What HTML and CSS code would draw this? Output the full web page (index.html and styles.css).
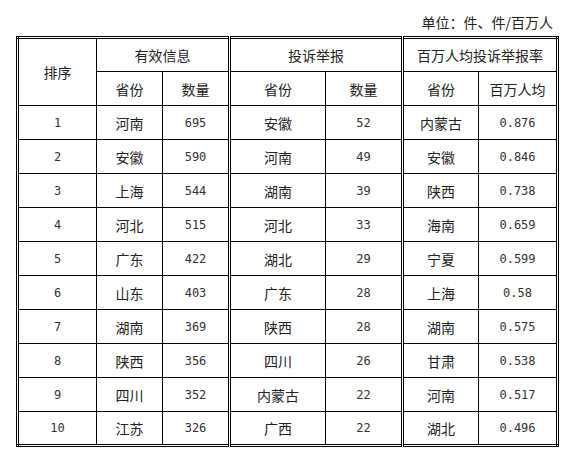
FILE: index.html
```html
<!DOCTYPE html>
<html lang="zh">
<head>
<meta charset="utf-8">
<link rel="stylesheet" href="styles.css">
</head>
<body>
<div class="page">
  <div class="unit">单位：件、件/百万人</div>
  <table class="rank">
    <colgroup>
      <col class="c1"><col class="c2"><col class="c3"><col class="c4"><col class="c5"><col class="c6"><col class="c7">
    </colgroup>
    <thead>
      <tr>
        <th rowspan="2">排序</th>
        <th colspan="2" class="g">有效信息</th>
        <th colspan="2" class="g">投诉举报</th>
        <th colspan="2">百万人均投诉举报率</th>
      </tr>
      <tr>
        <th>省份</th><th class="g">数量</th>
        <th>省份</th><th class="g">数量</th>
        <th>省份</th><th>百万人均</th>
      </tr>
    </thead>
    <tbody>
      <tr><td class="n">1</td><td>河南</td><td class="n g">695</td><td>安徽</td><td class="n g">52</td><td>内蒙古</td><td class="n">0.876</td></tr>
      <tr><td class="n">2</td><td>安徽</td><td class="n g">590</td><td>河南</td><td class="n g">49</td><td>安徽</td><td class="n">0.846</td></tr>
      <tr><td class="n">3</td><td>上海</td><td class="n g">544</td><td>湖南</td><td class="n g">39</td><td>陕西</td><td class="n">0.738</td></tr>
      <tr><td class="n">4</td><td>河北</td><td class="n g">515</td><td>河北</td><td class="n g">33</td><td>海南</td><td class="n">0.659</td></tr>
      <tr><td class="n">5</td><td>广东</td><td class="n g">422</td><td>湖北</td><td class="n g">29</td><td>宁夏</td><td class="n">0.599</td></tr>
      <tr><td class="n">6</td><td>山东</td><td class="n g">403</td><td>广东</td><td class="n g">28</td><td>上海</td><td class="n">0.58</td></tr>
      <tr><td class="n">7</td><td>湖南</td><td class="n g">369</td><td>陕西</td><td class="n g">28</td><td>湖南</td><td class="n">0.575</td></tr>
      <tr><td class="n">8</td><td>陕西</td><td class="n g">356</td><td>四川</td><td class="n g">26</td><td>甘肃</td><td class="n">0.538</td></tr>
      <tr><td class="n">9</td><td>四川</td><td class="n g">352</td><td>内蒙古</td><td class="n g">22</td><td>河南</td><td class="n">0.517</td></tr>
      <tr><td class="n">10</td><td>江苏</td><td class="n g">326</td><td>广西</td><td class="n g">22</td><td>湖北</td><td class="n">0.496</td></tr>
    </tbody>
  </table>
</div>
</body>
</html>
```

FILE: styles.css
```css
html, body {
  margin: 0;
  padding: 0;
  background: #fff;
}
body {
  font-family: "Noto Sans CJK SC", "Liberation Sans", sans-serif;
  color: #222;
}
.page {
  width: 540px;
  padding: 12px 0 0 16px;
}
.unit {
  font-size: 14px;
  line-height: 20px;
  height: 20px;
  text-align: right;
  padding-right: 3px;
  margin-bottom: 4px;
}
.rank {
  width: 540px;
  table-layout: fixed;
  border-collapse: collapse;
  border: 3px double #000;
}
.c1 { width: 79px; }
.c2 { width: 66px; }
.c3 { width: 67px; }
.c4 { width: 96px; }
.c5 { width: 77px; }
.c6 { width: 76px; }
.c7 { width: 79px; }
.rank th,
.rank td {
  border: 1px solid #000;
  padding: 0;
  text-align: center;
  vertical-align: middle;
  font-size: 14px;
  font-weight: normal;
  line-height: 18px;
}
.rank tr {
  height: 34px;
}
.rank .g {
  border-right: 3px double #000;
}
.rank td.n {
  font-family: "DejaVu Sans Mono", "Liberation Mono", monospace;
  font-size: 12px;
  color: #333;
}
```
